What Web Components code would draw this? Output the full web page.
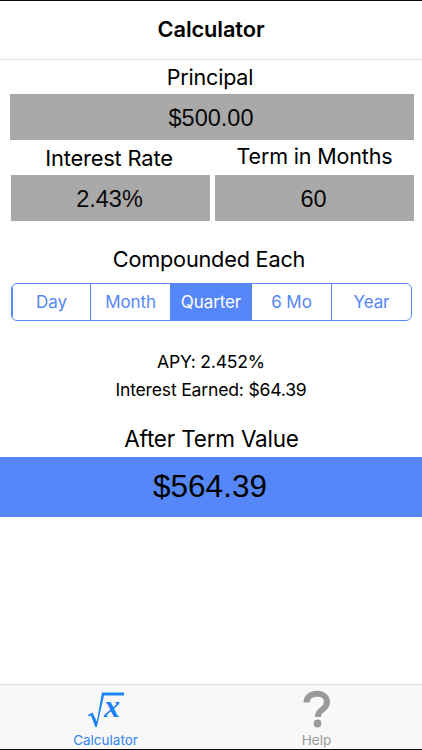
<!DOCTYPE html>
<html><head><meta charset="utf-8"><style>
html,body{margin:0;padding:0;background:#fff;height:100%}
body{width:422px;height:750px;overflow:hidden;font-family:Inter,"Liberation Sans",sans-serif;color:#000}
</style></head><body>
<calc-app>
<calc-nav slot="nav">Calculator</calc-nav>
<calc-main slot="main"></calc-main>
<calc-tabs slot="tabs"></calc-tabs>
</calc-app>
<script>
function def(name,html,init){customElements.define(name,class extends HTMLElement{constructor(){super();this.attachShadow({mode:'open'}).innerHTML=html;}connectedCallback(){init&&init(this)}})}
def('calc-app',`<style>:host{display:flex;flex-direction:column;width:422px;height:750px;box-sizing:border-box;border-top:1px solid #0a0a0a;border-bottom:1px solid #0a0a0a}
.m{flex:1;min-height:0}</style><slot name="nav"></slot><div class="m"><slot name="main"></slot></div><slot name="tabs"></slot>`);
def('calc-nav',`<style>:host{display:flex;align-items:center;justify-content:center;height:59px;box-sizing:border-box;border-bottom:1px solid #e2e2e2;font:600 21.8px Inter,"Liberation Sans",sans-serif;padding-bottom:2px;letter-spacing:-.1px}</style><slot></slot>`);
def('calc-label',`<style>:host{display:block;text-align:center;font:400 21.5px/24px Inter,"Liberation Sans",sans-serif;letter-spacing:-.2px}</style><slot></slot>`);
def('calc-field',`<style>:host{display:flex;align-items:center;justify-content:center;height:46px;box-sizing:border-box;padding:3px 2px 0 0;background:#a9a9a9;font:400 23.5px "Liberation Sans",sans-serif;color:#0a0a0a}</style><slot></slot>`);
def('calc-seg',`<style>:host{display:grid;grid-template-columns:78px 80px 81px 80px 1fr;height:38px;box-sizing:border-box;border:1.5px solid #5687f8;border-radius:6px;overflow:hidden;font:400 17px Inter,"Liberation Sans",sans-serif;color:#5687f8}
span{display:flex;align-items:center;justify-content:center;border-left:1.5px solid #5687f8;letter-spacing:-.1px}
span:first-child{border-left:0}
.on{background:#5687f8;color:#fff}</style>
<span>Day</span><span>Month</span><span class="on">Quarter</span><span>6 Mo</span><span>Year</span>`);
def('calc-main',`<style>:host{display:block;font-family:Inter,"Liberation Sans",sans-serif}
.p{padding:5px 8px 0 10px}
.p calc-label{margin:0 4px 5px 0}
.two{display:grid;grid-template-columns:199px 199px;gap:5px;padding:0 8px 0 11px;margin-top:4px}
.two calc-label.a{margin:2px 3px 5px 0;font-size:21.9px}
.two calc-label.b{margin-bottom:7px;letter-spacing:-.15px}
.c{margin:26px 4px 0 0;font-size:21.7px}
calc-seg{margin:12px 10px 0 11px}
.info{text-align:center;font:400 17.6px/28px Inter,"Liberation Sans",sans-serif;letter-spacing:-.2px;margin-top:27px}
.after{margin:23px 0 0 1px;font-size:22.5px}
.res{display:flex;align-items:center;justify-content:center;height:60px;box-sizing:border-box;padding:0 2px 2px 0;background:#5687f8;font:400 31.500px "Liberation Sans",sans-serif;margin-top:6px}
</style>
<div class="p"><calc-label>Principal</calc-label><calc-field>$500.00</calc-field></div>
<div class="two"><div><calc-label class="a">Interest Rate</calc-label><calc-field>2.43%</calc-field></div><div><calc-label class="b">Term in Months</calc-label><calc-field>60</calc-field></div></div>
<calc-label class="c">Compounded Each</calc-label>
<calc-seg></calc-seg>
<div class="info"><div>APY: 2.452%</div><div>Interest Earned: $64.39</div></div>
<calc-label class="after">After Term Value</calc-label>
<div class="res">$564.39</div>`);
def('calc-tab',`<style>:host{display:flex;flex-direction:column;align-items:center;flex:1;color:var(--c);font:400 13.5px/14px Inter,"Liberation Sans",sans-serif}
.i{height:43px;display:flex;align-items:flex-end}
.t{margin-top:5px}</style><div class="i"><slot name="icon"></slot></div><div class="t"><slot></slot></div>`);
def('calc-tabs',`<style>:host{display:flex;height:65px;box-sizing:border-box;background:#f8f8f8;border-top:1px solid #dcdcdc}
calc-tab{flex:none;width:211px}
</style>
<calc-tab style="--c:#2f86ee"><svg slot="icon" width="46" height="43" viewBox="-4 -5 46 43" style="display:block;overflow:visible"><path d="M1 25L5.500 22.500 9.800 31.500 15 2.500H37V5.500H17L9.800 37H8.300L4 25.500 1.500 26.500Z" fill="#1b82f2"/><text x="17" y="26.500" font-family="Liberation Serif" font-weight="700" font-style="italic" font-size="32" fill="#1b82f2">x</text></svg>Calculator</calc-tab>
<calc-tab style="--c:#9a9a9a"><svg slot="icon" width="28" height="38" viewBox="0 0 28 38" style="display:block"><path d="M3.500 12.500C3.500 7 8 3.800 14 3.800c6 0 10 3.200 10 8.200 0 3.500-2 5.500-4.500 7.500-3 2.300-4.500 3.500-4.500 7.500" fill="none" stroke="#9a9a9a" stroke-width="6"/><circle cx="14.500" cy="33.500" r="3.900" fill="#9a9a9a"/></svg>Help</calc-tab>`);
</script>
</body></html>
